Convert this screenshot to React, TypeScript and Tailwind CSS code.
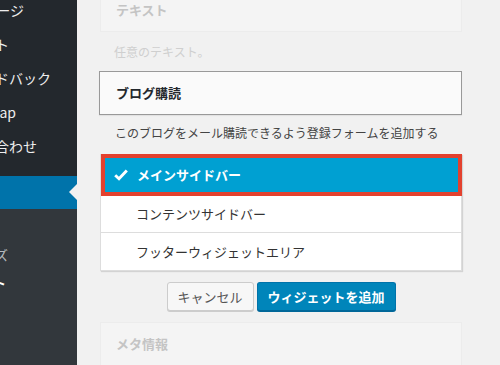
import React from "react";

const font = { fontFamily: '"Noto Sans CJK JP", "Noto Sans", sans-serif' };

function MenuItem({ label, end }: { label: string; end: number }) {
  return (
    <div className="flex h-[34px] items-center">
      <div className="flex justify-end" style={{ width: end }}>
        <span className="whitespace-nowrap text-[14px] text-[#eeeeee]">{label}</span>
      </div>
    </div>
  );
}

function SubItem({ label, end, current }: { label: string; end: number; current?: boolean }) {
  return (
    <div className="flex h-[28px] items-center">
      <div className="flex justify-end" style={{ width: end }}>
        <span
          className={
            "whitespace-nowrap text-[13px] " +
            (current ? "font-bold text-white" : "text-[rgba(240,245,250,0.7)]")
          }
        >
          {label}
        </span>
      </div>
    </div>
  );
}

export default function App() {
  return (
    <div className="flex h-[365px] w-[500px] overflow-hidden bg-[#f1f1f1]" style={font}>
      {/* Sidebar */}
      <div className="flex w-[77px] shrink-0 flex-col overflow-hidden bg-[#23282d]">
        <div className="mt-[-7px] flex flex-col">
          <MenuItem label="固定ページ" end={24} />
          <MenuItem label="コメント" end={9} />
          <MenuItem label="フィードバック" end={51} />
          <MenuItem label="PS Auto Sitemap" end={16} />
          <MenuItem label="お問い合わせ" end={37} />
        </div>
        <div className="h-[13px]" />
        <div className="relative h-[33px] bg-[#0073aa]">
          <div className="absolute right-0 top-[8px] h-0 w-0 border-y-[8px] border-r-[8px] border-y-transparent border-r-[#f1f1f1]" />
        </div>
        <div className="flex flex-1 flex-col bg-[#32373c] pt-[4px]">
          <SubItem label="テーマ" end={0} />
          <SubItem label="カスタマイズ" end={8} />
          <SubItem label="ウィジェット" end={6} current />
          <SubItem label="メニュー" end={0} />
        </div>
      </div>

      {/* Main */}
      <div className="flex flex-1 flex-col pl-[23px]">
        <div className="flex w-[362px] flex-col">
          {/* faded top card */}
          <div className="mt-[-12px] flex h-[44px] items-center border border-[#ececec] bg-[#f4f4f4] pl-[15px]">
            <span className="text-[13px] font-bold text-[#c4c4c4]">テキスト</span>
          </div>
          <div className="flex h-[39px] items-center pl-[14px]">
            <span className="text-[12px] text-[#cfcfcf]">任意のテキスト。</span>
          </div>

          {/* Blog subscription */}
          <div className="-ml-px flex h-[44px] items-center border border-[#999999] bg-[#fafafa] pl-[16px] shadow-[0_1px_1px_rgba(0,0,0,0.06)]">
            <span className="text-[13px] font-bold text-[#23282d]">ブログ購読</span>
          </div>
          <div className="h-[39px] pl-[15px] pt-[10px]">
            <span className="block text-[12px] leading-[16px] text-[#444444]">
              このブログをメール購読できるよう登録フォームを追加する
            </span>
          </div>

          {/* Sidebar chooser */}
          <div className="flex flex-col border border-[#dddddd] bg-white shadow-[1px_1px_1px_rgba(0,0,0,0.12)]">
            <div className="-mr-px -mt-px flex h-[42px] items-center border-4 border-[#e3412e] bg-[#00a0d2] pl-[9px]">
              <svg width="14" height="12" viewBox="0 0 14 12" className="mr-[9px]">
                <path d="M1.2 6.2 L5 9.8 L12.8 1.4" fill="none" stroke="white" strokeWidth="2.9" />
              </svg>
              <span className="text-[13px] font-bold text-white">メインサイドバー</span>
            </div>
            <div className="flex h-[37px] items-center border-b border-[#dddddd] pl-[35px]">
              <span className="text-[13px] text-[#333333]">コンテンツサイドバー</span>
            </div>
            <div className="flex h-[37px] items-center pl-[35px]">
              <span className="text-[13px] text-[#333333]">フッターウィジェットエリア</span>
            </div>
          </div>

          {/* Buttons */}
          <div className="mt-[11px] flex justify-center gap-[3px]">
            <button className="h-[29px] w-[87px] rounded-[3px] border border-[#cccccc] bg-[#f7f7f7] text-[13px] text-[#555555] shadow-[0_1px_0_#cccccc]">
              キャンセル
            </button>
            <button className="h-[29px] w-[139px] rounded-[3px] border border-[#0073aa] border-b-[#006799] bg-[#0085ba] text-[13px] font-bold text-white shadow-[0_1px_0_#006799]">
              ウィジェットを追加
            </button>
          </div>

          {/* faded meta card */}
          <div className="mt-[11px] flex h-[44px] items-center border border-[#ececec] bg-[#f4f4f4] pl-[15px]">
            <span className="text-[13px] font-bold text-[#c4c4c4]">メタ情報</span>
          </div>
        </div>
      </div>
    </div>
  );
}
